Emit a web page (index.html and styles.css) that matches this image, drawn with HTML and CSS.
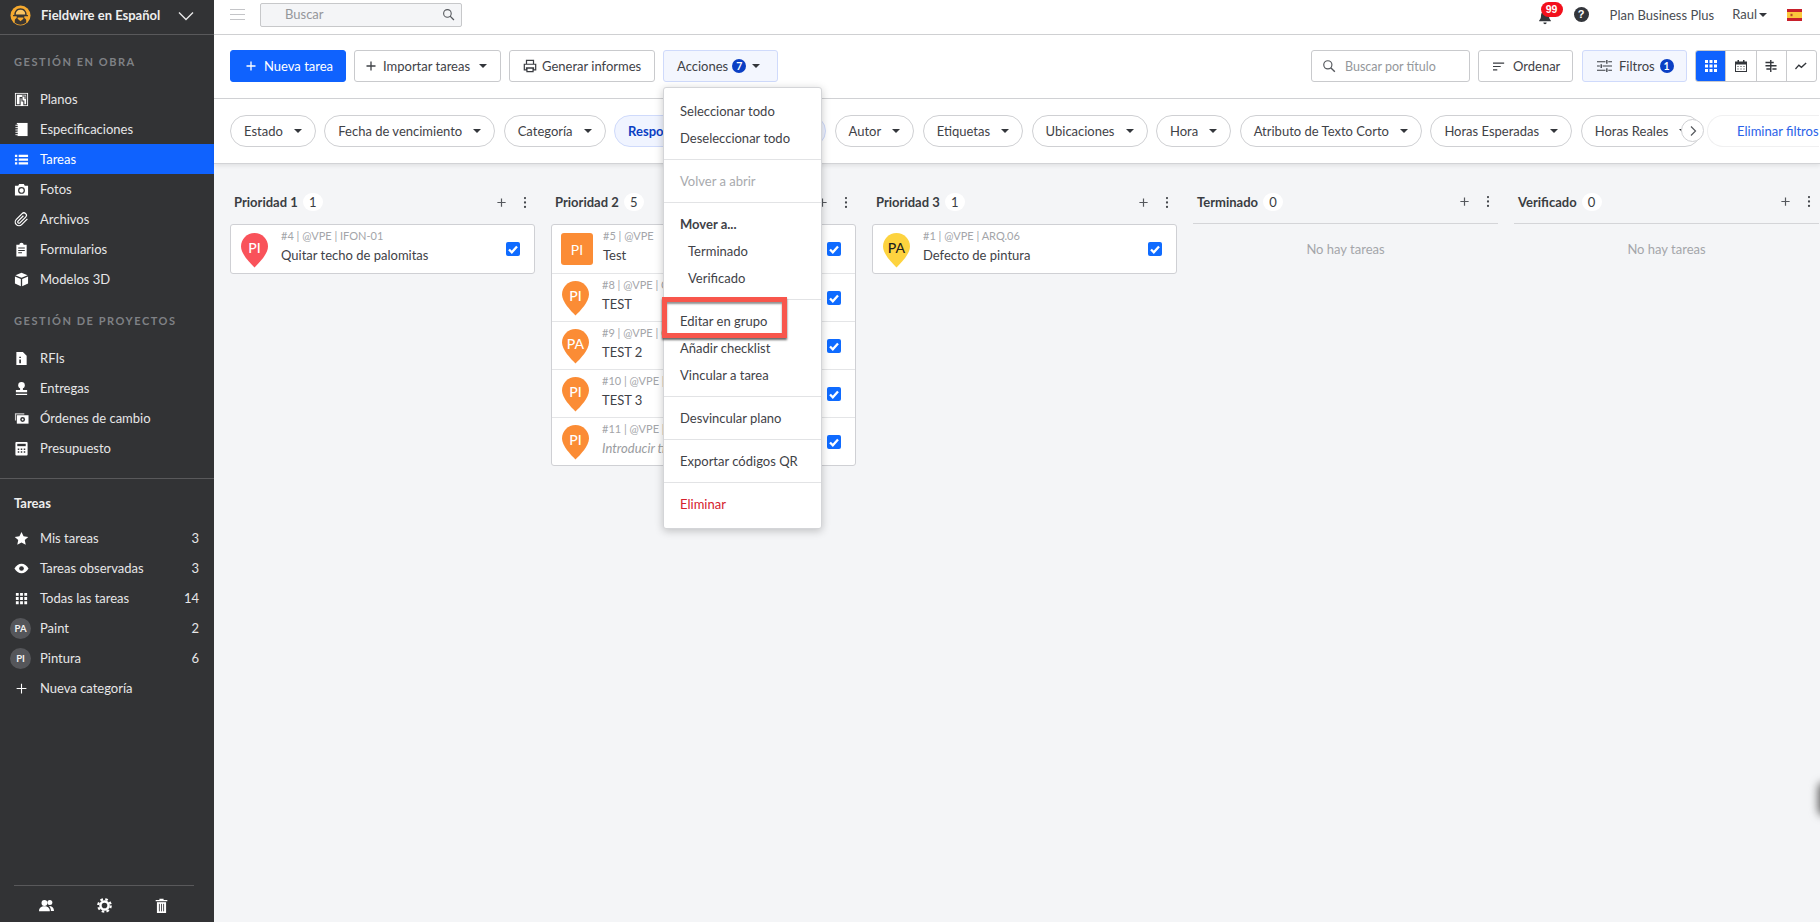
FILE: index.html
```html
<!DOCTYPE html>
<html lang="es">
<head>
<meta charset="utf-8">
<title>Tareas</title>
<link rel="stylesheet" href="styles.css">
</head>
<body>
<svg class="sprite" xmlns="http://www.w3.org/2000/svg">
  <symbol id="i-plus" viewBox="0 0 24 24"><path d="M12 3v18M3 12h18" fill="none" stroke="currentColor" stroke-width="2.6"/></symbol>
  <symbol id="i-search" viewBox="0 0 24 24"><circle cx="10" cy="10" r="7" fill="none" stroke="currentColor" stroke-width="2"/><path d="M15 15l7 7" stroke="currentColor" stroke-width="2.4" fill="none"/></symbol>
  <symbol id="i-pin" viewBox="0 0 27 35"><path d="M13.5 0C21 0 27 6 27 13.5 27 21 18 30 13.5 34.5 9 30 0 21 0 13.5 0 6 6 0 13.5 0Z" fill="currentColor"/></symbol>
  <symbol id="i-check" viewBox="0 0 14 14"><path d="M3 7.5l2.8 2.8L11 4.4" fill="none" stroke="#fff" stroke-width="2.3"/></symbol>
  <symbol id="i-dots" viewBox="0 0 4 16"><circle cx="2" cy="2.5" r="1.4" fill="currentColor"/><circle cx="2" cy="8" r="1.4" fill="currentColor"/><circle cx="2" cy="13.5" r="1.4" fill="currentColor"/></symbol>
</svg>

<div class="app">
  <aside class="sidebar">
    <div class="side-head">
      <svg class="logo" viewBox="0 0 22 22"><circle cx="11" cy="11" r="10.5" fill="#f5a92e"/><path d="M5 16c0-1 1-2 2-2.500V10h8v3.500c1 .5 2 1.500 2 2.500v2.500a10 10 0 0 1-12 0z" fill="#3a3633"/><path d="M4.500 10.500C4.500 6.500 7 3.500 11 3.500s6.500 3 6.500 7h1.300v1.300H3.200v-1.300z" fill="#3a3633"/><path d="M6 10c0-3 2-5 5-5s5 2 5 5z" fill="#f9c463"/><path d="M8 13h6v1.500l-3 2.500-3-2.500z" fill="#f5a92e"/></svg>
      <span class="side-title">Fieldwire en Español</span>
      <svg class="chev" viewBox="0 0 16 10"><path d="M1 1.500l7 7 7-7" fill="none" stroke="#e8e8e8" stroke-width="1.400"/></svg>
    </div>

    <div class="side-label first">GESTIÓN EN OBRA</div>
    <nav class="nav">
      <a class="nav-item"><svg class="ni" viewBox="0 0 16 16"><path d="M1 1h14v14H1z" fill="#fff"/><path d="M2.500 2.500h11v11h-3v-4h-2V6h-2v7.500h-4z M8.500 4.200h3.300v3.300" fill="none" stroke="#323335" stroke-width="1.100"/></svg><span>Planos</span></a>
      <a class="nav-item"><svg class="ni" viewBox="0 0 16 16"><path d="M3 1h11.500v14H3z" fill="#fff"/><path d="M1 3.500h3M1 6h3M1 8.500h3M1 11h3M1 13.500h3" stroke="#323335" stroke-width="2.400"/><path d="M1.500 3.500h3M1.500 6h3M1.500 8.500h3M1.500 11h3M1.500 13.500h3" stroke="#fff" stroke-width="1"/></svg><span>Especificaciones</span></a>
      <a class="nav-item active"><svg class="ni" viewBox="0 0 16 16"><path d="M1 3h2.500v2.400H1zM1 6.900h2.500v2.400H1zM1 10.800h2.500v2.400H1zM5 3h10v2.400H5zM5 6.900h10v2.400H5zM5 10.800h10v2.400H5z" fill="#fff"/></svg><span>Tareas</span></a>
      <a class="nav-item"><svg class="ni" viewBox="0 0 16 16"><path d="M1 4h3.500l1-2h5l1 2H15v10.500H1z" fill="#fff"/><circle cx="8" cy="9" r="3" fill="none" stroke="#323335" stroke-width="1.300"/></svg><span>Fotos</span></a>
      <a class="nav-item"><svg class="ni" viewBox="0 0 24 24"><path d="M21.440 11.050l-9.190 9.190a6 6 0 0 1-8.490-8.490l9.190-9.190a4 4 0 0 1 5.660 5.660l-9.200 9.190a2 2 0 0 1-2.830-2.830l8.490-8.480" fill="none" stroke="#fff" stroke-width="2"/></svg><span>Archivos</span></a>
      <a class="nav-item"><svg class="ni" viewBox="0 0 16 16"><path d="M2.500 3h3.200a2.300 2.300 0 0 1 4.600 0h3.200v12.500h-11z" fill="#fff"/><path d="M4.500 6.500h7M4.500 9h7M4.500 11.500h4" stroke="#323335" stroke-width="1.100"/></svg><span>Formularios</span></a>
      <a class="nav-item"><svg class="ni" viewBox="0 0 16 16"><path d="M8 .8l6.500 2.700L8 6.200 1.500 3.500zM1 4.800l6.300 2.600v7.800L1 12.300zM15 4.800L8.700 7.400v7.800l6.300-2.900z" fill="#fff"/></svg><span>Modelos 3D</span></a>
    </nav>

    <div class="side-label">GESTIÓN DE PROYECTOS</div>
    <nav class="nav">
      <a class="nav-item"><svg class="ni" viewBox="0 0 16 16"><path d="M2.500 1h7l4 4v10h-11z" fill="#fff"/><path d="M6.500 6v1.500M6.500 9v4" stroke="#323335" stroke-width="1.800"/></svg><span>RFIs</span></a>
      <a class="nav-item"><svg class="ni" viewBox="0 0 16 16"><circle cx="8" cy="4.500" r="3.500" fill="#fff"/><path d="M6.500 7h3v2.500H14V12H2V9.500h4.500zM2 13.500h12V15H2z" fill="#fff"/></svg><span>Entregas</span></a>
      <a class="nav-item"><svg class="ni" viewBox="0 0 16 16"><path d="M1 2.500h10v1.200H2.200V10H1z" fill="#c9c9c9"/><path d="M3 4.500h12.500v9H3z" fill="#fff"/><circle cx="9.200" cy="9" r="2.600" fill="#323335"/><circle cx="9.200" cy="9" r="1" fill="#fff"/></svg><span>Órdenes de cambio</span></a>
      <a class="nav-item"><svg class="ni" viewBox="0 0 16 16"><path d="M2.500 1h11a1 1 0 0 1 1 1v12.500a1 1 0 0 1-1 1h-11a1 1 0 0 1-1-1V2a1 1 0 0 1 1-1z" fill="#fff"/><path d="M3.500 3h9v2.500h-9z" fill="#323335"/><path d="M4 8h1.600v1.500H4zM7.200 8h1.600v1.500H7.200zM10.400 8H12v1.500h-1.600zM4 11h1.600v1.500H4zM7.200 11h1.600v1.500H7.200zM10.400 11H12v1.500h-1.600z" fill="#323335"/></svg><span>Presupuesto</span></a>
    </nav>

    <hr class="side-rule">
    <div class="side-sub">Tareas</div>
    <nav class="nav">
      <a class="nav-item"><svg class="ni" viewBox="0 0 16 16"><path d="M8 1l2.200 4.700 5 .6-3.700 3.400 1 5L8 12.200l-4.500 2.500 1-5L.8 6.300l5-.6z" fill="#fff"/></svg><span>Mis tareas</span><b class="count">3</b></a>
      <a class="nav-item"><svg class="ni" viewBox="0 0 16 16"><path d="M.5 8C2.500 4.700 5 3 8 3s5.500 1.700 7.500 5c-2 3.300-4.500 5-7.500 5S2.500 11.300.5 8z" fill="#fff"/><circle cx="8" cy="8" r="2.500" fill="#323335"/></svg><span>Tareas observadas</span><b class="count">3</b></a>
      <a class="nav-item"><svg class="ni" viewBox="0 0 16 16"><path d="M2 2h3v3H2zM6.500 2h3v3h-3zM11 2h3v3h-3zM2 6.500h3v3H2zM6.500 6.500h3v3h-3zM11 6.500h3v3h-3zM2 11h3v3H2zM6.500 11h3v3h-3zM11 11h3v3h-3z" fill="#fff"/></svg><span>Todas las tareas</span><b class="count">14</b></a>
      <a class="nav-item"><i class="avatar">PA</i><span>Paint</span><b class="count">2</b></a>
      <a class="nav-item"><i class="avatar">PI</i><span>Pintura</span><b class="count">6</b></a>
      <a class="nav-item"><svg class="ni plus" viewBox="0 0 24 24"><path d="M12 3v18M3 12h18" fill="none" stroke="#fff" stroke-width="2"/></svg><span>Nueva categoría</span></a>
    </nav>

    <div class="side-foot">
      <svg class="fi" viewBox="0 0 18 16"><circle cx="6.500" cy="5" r="3.500" fill="#fff"/><path d="M0 15c0-4 2.500-6 6.500-6s6.500 2 6.500 6z" fill="#fff"/><circle cx="13" cy="4.500" r="3" fill="#fff"/><path d="M12 8.500c3.500 0 6 2 6 6h-3.700c0-2.500-.8-4.500-2.300-6z" fill="#fff"/></svg>
      <svg class="fi" viewBox="0 0 24 24"><circle cx="12" cy="12" r="6.500" fill="none" stroke="#fff" stroke-width="4"/><circle cx="12" cy="12" r="10" fill="none" stroke="#fff" stroke-width="3.500" stroke-dasharray="4.200 3.650"/></svg>
      <svg class="fi" viewBox="0 0 16 18"><path d="M1 2.500h14V4H1zM5.500 1h5v1.500h-5z" fill="#fff"/><path d="M2.500 5h11v13h-11z" fill="#fff"/><path d="M5.500 7v9M8 7v9M10.500 7v9" stroke="#323335" stroke-width="1"/></svg>
    </div>
  </aside>

  <main class="main">
    <header class="topbar">
      <div class="burger"><i></i><i></i><i></i></div>
      <div class="global-search"><span>Buscar</span><svg class="search-ic" viewBox="0 0 24 24"><use href="#i-search"/></svg></div>
      <div class="top-right">
        <div class="bell">
          <svg viewBox="0 0 16 18"><path d="M8 1.500c3 0 4.800 2.200 4.800 5.200 0 3 .8 4.500 2.200 5.800v1H1v-1c1.400-1.300 2.200-2.800 2.200-5.800C3.200 3.700 5 1.500 8 1.500z" fill="#33363b"/><path d="M6 15h4a2 2 0 0 1-4 0z" fill="#33363b"/></svg>
          <span class="bell-badge">99</span>
        </div>
        <span class="help">?</span>
        <span class="plan">Plan Business Plus</span>
        <span class="user">Raul<i class="caret dark"></i></span>
        <svg class="flag" viewBox="0 0 15 12"><rect width="15" height="12" fill="#c8202b"/><rect y="3" width="15" height="6" fill="#fbc83c"/><rect x="3.500" y="4.800" width="2" height="2.400" fill="#b7472a"/></svg>
      </div>
    </header>

    <div class="toolbar">
      <button class="btn primary"><svg class="btn-plus" viewBox="0 0 24 24"><use href="#i-plus"/></svg>Nueva tarea</button>
      <button class="btn import"><svg class="btn-plus" viewBox="0 0 24 24"><use href="#i-plus"/></svg>Importar tareas<i class="caret gap"></i></button>
      <button class="btn report"><svg class="btn-ic" viewBox="0 0 16 16"><path d="M4 1.500h8V6H4z M1.500 6h13v6.500H12V10H4v2.500H1.500z M4.500 10.500h7v4h-7z" fill="none" stroke="#3a3d42" stroke-width="1.400"/></svg>Generar informes</button>
      <button class="btn tint actions">Acciones<span class="num">7</span><i class="caret"></i></button>
      <div class="tool-right">
        <div class="title-search"><svg class="ts-ic" viewBox="0 0 24 24"><use href="#i-search"/></svg><span>Buscar por título</span></div>
        <button class="btn sort"><svg class="btn-ic small" viewBox="0 0 14 12"><path d="M0 2h13M0 6h9M0 10h5" stroke="#3a3d42" stroke-width="1.300"/></svg>Ordenar</button>
        <button class="btn tint filt-btn"><svg class="btn-ic filt" viewBox="0 0 16 14"><path d="M0 2.500h9M12 2.500h4M0 7h3M6 7h10M0 11.500h9M12 11.500h4" stroke="#3a3d42" stroke-width="1.200"/><path d="M10.500 .5v4M4.500 5v4M10.500 9.500v4" stroke="#3a3d42" stroke-width="1.400"/></svg>Filtros<span class="num">1</span></button>
        <div class="views">
          <span class="view on"><svg viewBox="0 0 12 12"><path d="M0 0h3v3H0zM4.500 0h3v3h-3zM9 0h3v3H9zM0 4.500h3v3H0zM4.500 4.500h3v3h-3zM9 4.500h3v3H9zM0 9h3v3H0zM4.500 9h3v3h-3zM9 9h3v3H9z" fill="#fff"/></svg></span>
          <span class="view"><svg viewBox="0 0 12 12"><path d="M0 1.500h12V12H0z" fill="#33363b"/><path d="M2.500 0h1.500v2H2.500zM8 0h1.500v2H8z" fill="#33363b"/><path d="M1 4.500h10v6.500H1z" fill="#fff"/><path d="M2.500 6h1v1h-1zM5.500 6h1v1h-1zM8.500 6h1v1h-1zM2.500 8.500h1v1h-1zM5.500 8.500h1v1h-1zM8.500 8.500h1v1h-1z" fill="#33363b"/></svg></span>
          <span class="view"><svg viewBox="0 0 12 13"><path d="M0 2h9V3.500H0zM5 0h1.500v13H5zM0 5.500h4v1.500H0zM3 5.500h9v1.500H3zM7.500 9h4.500v1.500H7.500z M1 9h4v1.500H1z" fill="#33363b"/></svg></span>
          <span class="view"><svg viewBox="0 0 14 10"><path d="M.5 8.500L4.500 4l3 2.500L13 1.500" fill="none" stroke="#33363b" stroke-width="1.600"/></svg></span>
        </div>
      </div>
    </div>

    <div class="filters">
      <div class="pills">
        <span class="pill">Estado<i class="caret"></i></span>
        <span class="pill">Fecha de vencimiento<i class="caret"></i></span>
        <span class="pill">Categoría<i class="caret"></i></span>
        <span class="pill on">Responsable<i class="caret"></i></span>
        <span class="pill">Autor<i class="caret"></i></span>
        <span class="pill">Etiquetas<i class="caret"></i></span>
        <span class="pill">Ubicaciones<i class="caret"></i></span>
        <span class="pill">Hora<i class="caret"></i></span>
        <span class="pill">Atributo de Texto Corto<i class="caret"></i></span>
        <span class="pill">Horas Esperadas<i class="caret"></i></span>
        <span class="pill">Horas Reales<i class="caret"></i></span>
      </div>
      <span class="scroll-next"><svg viewBox="0 0 8 12"><path d="M2 1.500L6.500 6 2 10.500" fill="none" stroke="#55585d" stroke-width="1.200"/></svg></span>
      <span class="clear">Eliminar filtros</span>
    </div>

    <div class="board">
      <section class="col">
        <div class="col-head"><strong>Prioridad 1</strong><span class="cnt">1</span><svg class="ch-plus" viewBox="0 0 24 24"><use href="#i-plus"/></svg><svg class="ch-dots" viewBox="0 0 4 16"><use href="#i-dots"/></svg></div>
        <div class="card">
          <div class="row">
            <div class="pin red"><svg viewBox="0 0 27 35"><use href="#i-pin"/></svg><span>PI</span></div>
            <div class="txt"><small>#4 | @VPE | IFON-01</small><p>Quitar techo de palomitas</p></div>
            <svg class="cb" viewBox="0 0 14 14"><use href="#i-check"/></svg>
          </div>
        </div>
      </section>

      <section class="col">
        <div class="col-head"><strong>Prioridad 2</strong><span class="cnt">5</span><svg class="ch-plus" viewBox="0 0 24 24"><use href="#i-plus"/></svg><svg class="ch-dots" viewBox="0 0 4 16"><use href="#i-dots"/></svg></div>
        <div class="card">
          <div class="row">
            <div class="square">PI</div>
            <div class="txt"><small>#5 | @VPE</small><p>Test</p></div>
            <svg class="cb" viewBox="0 0 14 14"><use href="#i-check"/></svg>
          </div>
          <div class="row">
            <div class="pin orange"><svg viewBox="0 0 27 35"><use href="#i-pin"/></svg><span>PI</span></div>
            <div class="txt"><small>#8 | @VPE | CAR.01</small><p>TEST</p></div>
            <svg class="cb" viewBox="0 0 14 14"><use href="#i-check"/></svg>
          </div>
          <div class="row">
            <div class="pin orange"><svg viewBox="0 0 27 35"><use href="#i-pin"/></svg><span>PA</span></div>
            <div class="txt"><small>#9 | @VPE | CAR.01</small><p>TEST 2</p></div>
            <svg class="cb" viewBox="0 0 14 14"><use href="#i-check"/></svg>
          </div>
          <div class="row">
            <div class="pin orange"><svg viewBox="0 0 27 35"><use href="#i-pin"/></svg><span>PI</span></div>
            <div class="txt"><small>#10 | @VPE | CAR.01</small><p>TEST 3</p></div>
            <svg class="cb" viewBox="0 0 14 14"><use href="#i-check"/></svg>
          </div>
          <div class="row">
            <div class="pin orange"><svg viewBox="0 0 27 35"><use href="#i-pin"/></svg><span>PI</span></div>
            <div class="txt"><small>#11 | @VPE | CAR.01</small><p class="ph">Introducir título</p></div>
            <svg class="cb" viewBox="0 0 14 14"><use href="#i-check"/></svg>
          </div>
        </div>
      </section>

      <section class="col">
        <div class="col-head"><strong>Prioridad 3</strong><span class="cnt">1</span><svg class="ch-plus" viewBox="0 0 24 24"><use href="#i-plus"/></svg><svg class="ch-dots" viewBox="0 0 4 16"><use href="#i-dots"/></svg></div>
        <div class="card">
          <div class="row">
            <div class="pin yellow"><svg viewBox="0 0 27 35"><use href="#i-pin"/></svg><span>PA</span></div>
            <div class="txt"><small>#1 | @VPE | ARQ.06</small><p>Defecto de pintura</p></div>
            <svg class="cb" viewBox="0 0 14 14"><use href="#i-check"/></svg>
          </div>
        </div>
      </section>

      <section class="col">
        <div class="col-head ruled"><strong>Terminado</strong><span class="cnt">0</span><svg class="ch-plus" viewBox="0 0 24 24"><use href="#i-plus"/></svg><svg class="ch-dots" viewBox="0 0 4 16"><use href="#i-dots"/></svg></div>
        <div class="empty">No hay tareas</div>
      </section>

      <section class="col">
        <div class="col-head ruled"><strong>Verificado</strong><span class="cnt">0</span><svg class="ch-plus" viewBox="0 0 24 24"><use href="#i-plus"/></svg><svg class="ch-dots" viewBox="0 0 4 16"><use href="#i-dots"/></svg></div>
        <div class="empty">No hay tareas</div>
      </section>
    </div>

    <div class="menu">
      <div class="mi">Seleccionar todo</div>
      <div class="mi">Deseleccionar todo</div>
      <hr>
      <div class="mi off">Volver a abrir</div>
      <hr>
      <div class="mi strong">Mover a...</div>
      <div class="mi sub">Terminado</div>
      <div class="mi sub">Verificado</div>
      <hr>
      <div class="mi mark">Editar en grupo</div>
      <div class="mi">Añadir checklist</div>
      <div class="mi">Vincular a tarea</div>
      <hr>
      <div class="mi">Desvincular plano</div>
      <hr>
      <div class="mi">Exportar códigos QR</div>
      <hr>
      <div class="mi danger">Eliminar</div>
    </div>
    <div class="edge-blob"></div>
  </main>
</div>
</body>
</html>
```

FILE: styles.css
```css
*, *::after { box-sizing: border-box; }
html, body { margin: 0; height: 100%; overflow: hidden; }
body { font-family: Lato, "Open Sans", sans-serif; font-size: 13px; color: #3f4247; background: #fff; }
.sprite { display: none; }
.app { display: flex; width: 1820px; height: 922px; }

/* sidebar */
.sidebar { width: 214px; flex: none; background: #323335; color: #e9e9ea; display: flex; flex-direction: column; }
.side-head { height: 35px; border-bottom: 1px solid #59595b; display: flex; align-items: center; padding-left: 10px; flex: none; }
.logo { width: 21px; height: 21px; margin-top: -4px; }
.side-title { margin-left: 10px; margin-top: -5px; font-weight: 700; font-size: 13px; color: #eee; width: 137px; white-space: nowrap; }
.chev { width: 16px; height: 10px; margin-top: -3px; }
.side-label { font-size: 11px; line-height: 14px; font-weight: 700; letter-spacing: 1.55px; color: #7f8185; padding-left: 14px; margin: 20px 0 15px; }
.nav { display: flex; flex-direction: column; }
.nav-item { height: 30px; display: flex; align-items: center; padding: 0 15px 0 14px; color: #e6e6e7; font-size: 13px; }
.nav-item.active { background: #0f62fe; color: #fff; }
.ni { width: 15px; height: 15px; margin-right: 11px; flex: none; }
.ni.plus { width: 13px; height: 13px; margin: 0 12px 0 1px; }
.count { margin-left: auto; font-weight: 400; }
.avatar { width: 21px; height: 21px; border-radius: 50%; background: #55565a; color: #f2f2f2; font-style: normal; font-size: 9.500px; font-weight: 700; display: flex; align-items: center; justify-content: center; margin: 0 9px 0 -4px; flex: none; }
.side-rule { border: 0; border-top: 1px solid #59595b; margin: 15px 0 0; width: 100%; }
.side-sub { font-weight: 700; font-size: 13px; line-height: 14px; color: #eee; padding-left: 14px; margin: 17px 0 13px; }
.side-foot { margin: auto 20px 0 14px; border-top: 1px solid #59595b; height: 37px; display: flex; align-items: center; justify-content: space-between; padding: 3px 25px 0 25px; }
.fi { width: 15px; height: 15px; }

/* main */
.main { flex: 1; min-width: 0; position: relative; display: flex; flex-direction: column; background: #f4f5f7; }
.topbar { height: 35px; flex: none; background: #fff; border-bottom: 1px solid #cfd0d2; display: flex; align-items: center; padding: 0 18px 5px 16px; }
.burger { width: 15px; display: flex; flex-direction: column; gap: 4px; }
.burger i { display: block; height: 1px; background: #c4c5c8; }
.global-search { margin-left: 15px; width: 202px; height: 24px; border: 1px solid #c7c8ca; border-radius: 2px; background: #f4f5f7; display: flex; align-items: center; justify-content: space-between; padding: 0 6px 1px 24px; color: #94979b; font-size: 13px; }
.search-ic { width: 13px; height: 13px; color: #55585d; }
.top-right { margin-left: auto; display: flex; align-items: center; }
.bell { position: relative; width: 14px; height: 15px; margin-top: 5px; }
.bell svg { width: 14px; height: 15px; display: block; }
.bell-badge { position: absolute; left: 3px; top: -8px; width: 22px; height: 15px; border-radius: 8px; background: #f2101c; color: #fff; font: 700 10.500px/15px "Liberation Sans", sans-serif; text-align: center; }
.help { width: 15px; height: 15px; border-radius: 50%; background: #33363b; color: #fff; font: 700 11px/15px "Liberation Sans", sans-serif; text-align: center; margin-left: 22px; }
.plan { margin-left: 21px; font-size: 13px; color: #4a4d52; }
.user { margin-left: 18px; font-size: 13px; color: #4a4d52; display: flex; align-items: center; margin-top: -2px; }
.caret { display: inline-block; width: 0; height: 0; border: 4px solid transparent; border-top-color: #33363b; border-bottom: 0; flex: none; }
.caret.dark { margin-left: 2px; margin-top: 2px; }
.flag { width: 15px; height: 12px; margin-left: 20px; margin-top: 1px; }

.toolbar { height: 64px; flex: none; background: #fff; border-bottom: 1px solid #d2d3d6; display: flex; align-items: center; padding: 0 3px 1px 16px; gap: 8px; }
.btn { height: 32px; border: 1px solid #c9cacd; border-radius: 3px; background: #fff; color: #3f4247; font: 400 13px Lato, sans-serif; display: inline-flex; align-items: center; padding: 0 13px; white-space: nowrap; flex: none; }
.btn.primary { background: #0f62fe; border-color: #0f62fe; color: #fff; width: 116px; padding: 0 14px; }
.btn-plus { width: 12px; height: 12px; margin-right: 7px; flex: none; }
.btn.import { width: 147px; padding: 0 10px; }
.btn.import .btn-plus { margin-right: 6px; }
.btn.report { width: 146px; }
.btn-ic { width: 14px; height: 14px; margin-right: 5px; flex: none; }
.btn-ic.small { width: 12px; height: 11px; margin-right: 8px; }
.btn-ic.filt { width: 15px; margin-right: 7px; }
.btn.tint { background: #f3f6fe; border-color: #cfdafb; }
.btn.actions { width: 115px; }
.btn .caret.gap { margin-left: 9px; }
.num { width: 14px; height: 14px; border-radius: 50%; background: #0b3fc4; color: #fff; font-size: 10.500px; font-weight: 700; line-height: 14px; text-align: center; margin: 0 6px 0 4px; flex: none; }
.tool-right { margin-left: auto; display: flex; align-items: center; gap: 8px; }
.title-search { width: 159px; height: 32px; border: 1px solid #c9cacd; border-radius: 3px; display: flex; align-items: center; padding-left: 10px; color: #94979b; font-size: 12.500px; }
.ts-ic { width: 14px; height: 14px; color: #55585d; margin-right: 9px; }
.btn.sort { width: 95px; padding: 0 14px; }
.btn.filt-btn { width: 105px; padding: 0 14px; margin-left: 1px; }
.btn.filt-btn .num { margin: 0 0 0 5px; }
.views { display: flex; height: 32px; border: 1px solid #c9cacd; border-radius: 3px; overflow: hidden; width: 122px; }
.view { flex: 1; display: flex; align-items: center; justify-content: center; border-left: 1px solid #c9cacd; }
.view:first-child { border-left: 0; background: #0f62fe; }
.view svg { width: 12px; height: 12px; }

.filters { height: 65px; flex: none; background: #fff; border-bottom: 1px solid #d2d3d6; box-shadow: 0 2px 4px rgba(0,0,0,.08); display: flex; align-items: center; padding-left: 16px; position: relative; z-index: 1; }
.pills { width: 1468px; display: flex; gap: 8.500px; overflow: hidden; flex: none; }
.pill { height: 32px; border: 1px solid #cfd0d3; border-radius: 16px; display: inline-flex; align-items: center; padding: 0 13px; font-size: 13px; color: #3f4247; white-space: nowrap; flex: none; gap: 11px; }
.pill.on { background: #f0f4ff; border-color: #cfdafb; color: #0b3fc4; font-weight: 700; width: 212px; }
.scroll-next { position: absolute; left: 1467px; top: 20px; width: 23px; height: 23px; border: 1px solid #cfd0d3; border-radius: 50%; background: #fff; display: flex; align-items: center; justify-content: center; }
.scroll-next svg { width: 8px; height: 12px; }
.clear { margin-left: 9px; height: 32px; flex: none; border: 1px solid #f0f0f1; border-right: 0; border-radius: 16px 0 0 16px; padding-left: 29px; display: flex; align-items: center; color: #2a62e8; font-size: 13px; white-space: nowrap; }

.board { flex: 1; display: flex; gap: 16px; padding: 20px 0 0 16px; overflow: hidden; }
.col { width: 305px; flex: none; }
.col-head { height: 36px; display: flex; align-items: center; padding-left: 4px; margin-bottom: 4px; color: #3a3d42; position: relative; }
.col-head strong { font-size: 13px; font-weight: 700; }
.col-head.ruled { margin-bottom: 0; height: 40px; border-bottom: 1px solid #d4d5d8; padding-bottom: 4px; }
.cnt { margin-left: 5px; min-width: 20px; height: 18px; border-radius: 9px; background: #fff; text-align: center; font-size: 13px; line-height: 18px; }
.ch-plus { margin-left: auto; width: 11px; height: 11px; color: #55585d; }
.ch-dots { margin: 0 8px 0 16px; width: 4px; height: 13px; color: #44474c; }
.empty { text-align: center; color: #a4a6aa; font-size: 13px; padding-top: 17px; }

.card { background: #fff; border: 1px solid #cfd0d4; border-radius: 3px; }
.row { height: 48px; display: flex; align-items: center; padding: 0 14px 0 10px; border-top: 1px solid #e4e5e7; }
.row:first-child { border-top: 0; }
.pin { width: 27px; height: 35px; margin-right: 13px; display: grid; justify-items: center; flex: none; position: relative; top: 1px; }
.pin svg, .pin span { grid-area: 1 / 1; }
.pin svg { width: 27px; height: 35px; }
.pin span { color: #fff; font-size: 14px; font-weight: 500; line-height: 14px; padding-top: 8px; }
.pin.red { color: #f9525a; }
.pin.orange { color: #fb8c35; }
.pin.yellow { color: #fdd33f; }
.pin.yellow span { color: #1e1e1e; }
.square { width: 32px; height: 32px; border-radius: 3px; background: #fb8c35; color: #fff; font-size: 14px; display: flex; align-items: center; justify-content: center; margin-left: -1px; margin-right: 10px; flex: none; }
.txt { flex: 1; min-width: 0; margin-top: -5px; }
.txt small { display: block; font-size: 11px; line-height: 14px; color: #a3a5a9; }
.txt p { margin: 4px 0 0; font-size: 13px; line-height: 17px; color: #3f4247; }
.txt p.ph { color: #9a9ca0; font-style: italic; }
.cb { width: 14px; height: 14px; background: #0f6bff; border-radius: 2px; flex: none; }

/* dropdown */
.menu { position: absolute; left: 449px; top: 87px; width: 159px; height: 442px; background: #fff; border: 1px solid #d4d5d8; border-radius: 3px; box-shadow: 0 2px 8px rgba(0,0,0,.22); padding-top: 10px; z-index: 5; }
.menu hr { border: 0; border-top: 1px solid #e2e3e5; margin: 7px 0 8px; }
.mi { height: 27px; line-height: 27px; padding-left: 16px; font-size: 13px; color: #3f4247; white-space: nowrap; position: relative; }
.mi.off { color: #a8aaae; }
.mi.strong { font-weight: 700; }
.mi.sub { padding-left: 24px; }
.mi.danger { color: #d5202c; }
.mi.mark::after { content: ""; position: absolute; left: -2px; top: -11px; width: 125px; height: 41px; border: 5px solid #f8564c; box-shadow: 0 2px 2px rgba(40,40,40,.7), inset 0 2px 2px rgba(40,40,40,.5); }

.edge-blob { position: absolute; right: -12px; top: 782px; width: 14px; height: 34px; border-radius: 7px; background: #666; filter: blur(4px); }
```
